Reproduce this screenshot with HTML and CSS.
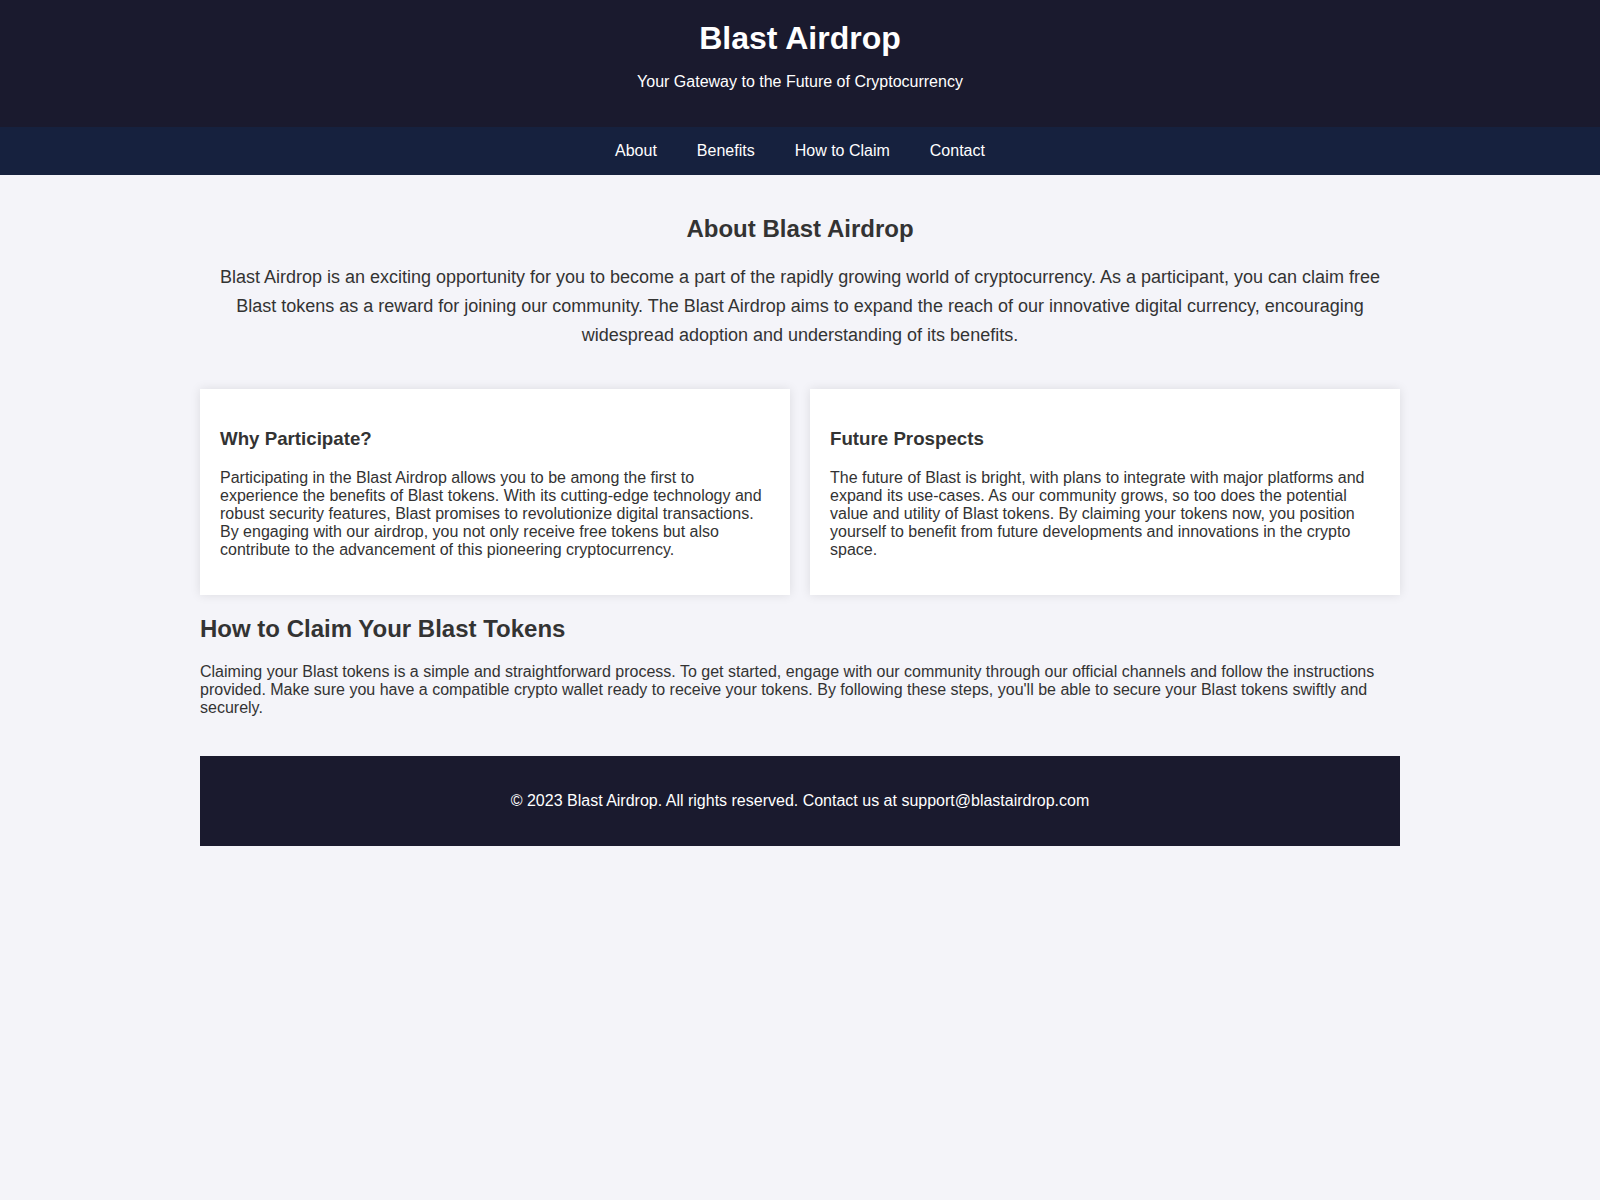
FILE: index.html
```html
<!DOCTYPE html>
<html lang="en">
<head>
<meta charset="utf-8">
<title>Blast Airdrop</title>
<link rel="stylesheet" href="styles.css">
</head>
<body>
<header class="site-header">
  <h1>Blast Airdrop</h1>
  <p>Your Gateway to the Future of Cryptocurrency</p>
</header>
<nav class="site-nav">
  <a href="#about">About</a>
  <a href="#benefits">Benefits</a>
  <a href="#claim">How to Claim</a>
  <a href="#contact">Contact</a>
</nav>
<main class="container">
  <section class="about" id="about">
    <h2>About Blast Airdrop</h2>
    <p>Blast Airdrop is an exciting opportunity for you to become a part of the rapidly growing world of cryptocurrency. As a participant, you can claim free Blast tokens as a reward for joining our community. The Blast Airdrop aims to expand the reach of our innovative digital currency, encouraging widespread adoption and understanding of its benefits.</p>
  </section>
  <section class="cards" id="benefits">
    <div class="card">
      <h3>Why Participate?</h3>
      <p>Participating in the Blast Airdrop allows you to be among the first to experience the benefits of Blast tokens. With its cutting-edge technology and robust security features, Blast promises to revolutionize digital transactions. By engaging with our airdrop, you not only receive free tokens but also contribute to the advancement of this pioneering cryptocurrency.</p>
    </div>
    <div class="card">
      <h3>Future Prospects</h3>
      <p>The future of Blast is bright, with plans to integrate with major platforms and expand its use-cases. As our community grows, so too does the potential value and utility of Blast tokens. By claiming your tokens now, you position yourself to benefit from future developments and innovations in the crypto space.</p>
    </div>
  </section>
  <section class="claim" id="claim">
    <h2>How to Claim Your Blast Tokens</h2>
    <p>Claiming your Blast tokens is a simple and straightforward process. To get started, engage with our community through our official channels and follow the instructions provided. Make sure you have a compatible crypto wallet ready to receive your tokens. By following these steps, you'll be able to secure your Blast tokens swiftly and securely.</p>
  </section>
  <footer class="site-footer" id="contact">
    <p>&copy; 2023 Blast Airdrop. All rights reserved. Contact us at support@blastairdrop.com</p>
  </footer>
</main>
</body>
</html>
```
FILE: styles.css
```css
body {
  margin: 0;
  font-family: "Liberation Sans", Arial, sans-serif;
  background: #f4f4f9;
  color: #333;
}

.site-header {
  background: #1a1a2e;
  color: #fff;
  text-align: center;
  padding: 20px 0;
}

.site-header h1 {
  margin: 0;
  font-size: 32px;
}

.site-header p {
  margin: 16px 0;
  font-size: 16px;
}

.site-nav {
  background: #16213e;
  display: flex;
  justify-content: center;
  gap: 40px;
  padding: 15px 0;
}

.site-nav a {
  color: #fff;
  text-decoration: none;
  font-size: 16px;
}

.container {
  max-width: 1200px;
  margin: 0 auto;
}

.about {
  text-align: center;
  padding: 20px 0 22px;
}

.about h2 {
  font-size: 24px;
  margin: 20px 0;
}

.about p {
  font-size: 18px;
  line-height: 1.6;
  margin: 18px 0;
}

.cards {
  display: grid;
  grid-template-columns: 1fr 1fr;
  gap: 20px;
}

.card {
  background: #fff;
  padding: 20px;
  box-shadow: 0 0 10px rgba(0, 0, 0, 0.1);
}

.card h3 {
  font-size: 18.72px;
  margin: 18.72px 0;
}

.card p {
  margin: 16px 0;
}

.claim {
  padding-bottom: 23px;
}

.claim h2 {
  font-size: 24px;
  margin: 20px 0;
}

.claim p {
  margin: 16px 0;
}

.site-footer {
  background: #1a1a2e;
  color: #fff;
  text-align: center;
  padding: 20px;
}

.site-footer p {
  margin: 16px 0;
}
```
